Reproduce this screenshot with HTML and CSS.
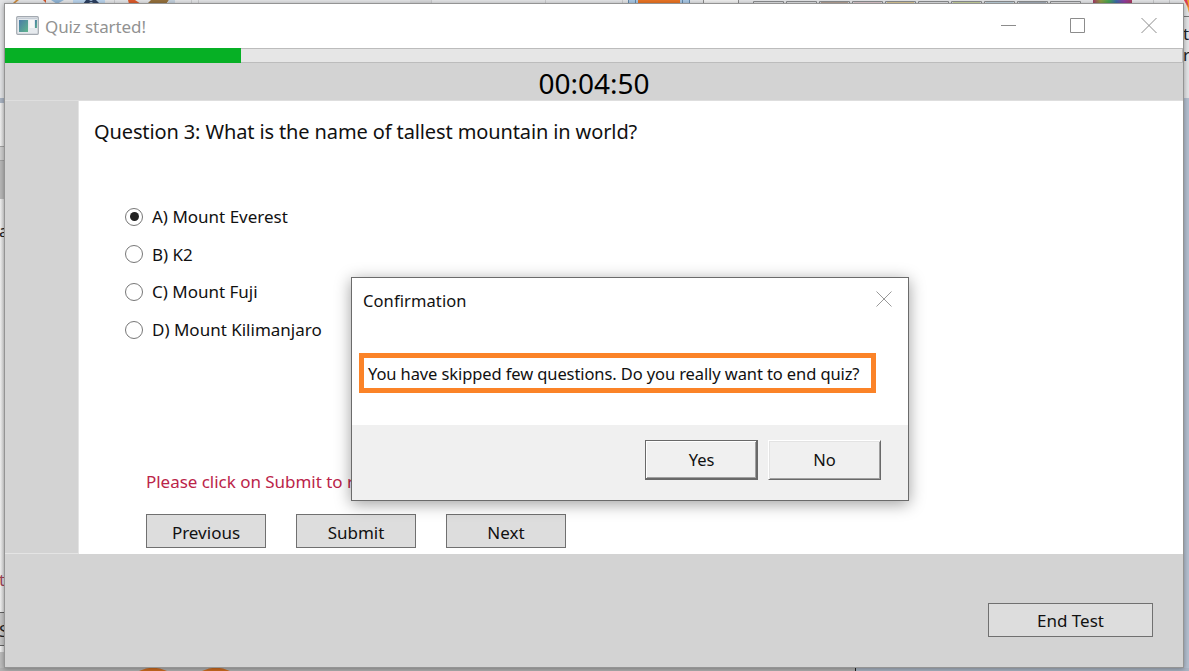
FILE: index.html
```
<!DOCTYPE html>
<html lang="en">
<head>
<meta charset="utf-8">
<title>Quiz started!</title>
<link rel="stylesheet" href="styles.css">
</head>
<body>
<div class="desktop">
  <svg class="backdrop" width="1189" height="671" viewBox="0 0 1189 671">
    <defs>
      <linearGradient id="rainbow"><stop offset="0" stop-color="#a33a66"/><stop offset=".2" stop-color="#8d9a42"/><stop offset=".4" stop-color="#46a551"/><stop offset=".6" stop-color="#3d69a8"/><stop offset=".8" stop-color="#8e3da0"/><stop offset="1" stop-color="#a83a5c"/></linearGradient>
      <linearGradient id="edge"><stop offset="0" stop-color="#f1f1f1"/><stop offset="1" stop-color="#d8d8d8"/></linearGradient>
    </defs>
    <rect width="1189" height="671" fill="#e3e4e6"/>
    <path d="M12 4L16 0h3l-5 4z" fill="#c98a3f"/><path d="M43 0h3v3z" fill="#d0562c"/><path d="M51 0h13l-7 4z" fill="#8fb3d4"/>
    <rect x="73" width="32" height="4" fill="#b9d3ec"/><path d="M83 4l3-4h3l2 1 2-1h3l4 4h-4l-5-2-4 2z" fill="#2c3f60"/>
    <path d="M128 0h7l6 4h-12z" fill="#dc5b2b"/><path d="M151 0h18l-3 4h-19z" fill="#94703c"/><path d="M169 0h6v4h-8z" fill="#c3d0dc"/>
    <path d="M114.500 0v4M191.500 0v4M198.500 0v4M431.500 0v4M545.500 0v4M622.500 0v4" stroke="#c9cacc"/>
    <rect x="410" width="21" height="4" fill="#d8d9db"/>
    <rect x="628" width="62" height="4" fill="#a9c7e4"/><path d="M628.500 0v4M635.500 0v4M682.500 0v4M689.500 0v4" stroke="#6188aa"/><rect x="638" width="42" height="4" fill="#e97424"/>
    <path d="M703.500 0v4M738.500 0v4" stroke="#8b8b8b"/><rect x="704" width="34" height="4" fill="#eeeeee"/>
    <g fill="none" stroke="#8b8d8f">
      <path d="M753.500 4V1.500h30V4M786.500 4V1.500h30V4M819.500 4V1.500h30V4M852.500 4V1.500h30V4M885.500 4V1.500h30V4M918.500 4V1.500h30V4M951.500 4V1.500h30V4M984.500 4V1.500h30V4M1017.500 4V1.500h30V4M1050.500 4V1.500h30V4"/>
    </g>
    <path d="M821 3h27" stroke="#8a6248"/><path d="M854 3h27" stroke="#dfb0b8"/><path d="M887 3h27" stroke="#d9b04a"/><path d="M953 3h27" stroke="#b7c95a"/><path d="M986 3h27" stroke="#9fc4d8"/><path d="M1019 3h27" stroke="#687c92"/>
    <rect x="1093" width="39" height="4" fill="url(#rainbow)"/><path d="M1153.500 0v4M1169.500 0v4" stroke="#c5c6c8"/>
    <path d="M1184 0h5v13q-1-6-5-13z" fill="#f0a52b"/><path d="M1184 0h3l2 8z" fill="#d93a62"/>
    <path d="M1183 16.500h6" stroke="#777"/>
    <rect x="1183" y="98" width="6" height="573" fill="#b3bfcf"/>
    <rect x="0" y="98" width="5" height="5" fill="#a9b3c2"/>
    <rect x="0" y="103" width="5" height="568" fill="url(#edge)"/>
    <rect x="0" y="147" width="5" height="14" fill="#d0d0d0"/><path d="M0 146.500h5M0 160.500h5" stroke="#a2a2a2"/>
    <rect x="0" y="161" width="5" height="38" fill="#b8b8b8"/>
    <rect x="0" y="612" width="5" height="34" fill="#c7c7c7"/><path d="M0 612.500h5M0 645.500h5" stroke="#626262"/>
    <rect x="0" y="652" width="5" height="19" fill="#bdbdbd"/>
    <rect x="0" y="668" width="855" height="3" fill="#b2b2b2"/><path d="M855.500 668v3" stroke="#222" />
    <rect x="856" y="668" width="333" height="3" fill="#aab5c4"/>
    <path d="M139 671q14-7 28 0zM202 671q14-7 28 0z" fill="#ce6c20"/>
    <g class="stray">
      <text x="-1" y="237">a</text><text x="-1" y="586" fill="#a04458">t</text><text x="-1" y="637">S</text>
      <text x="1183" y="40">t</text><text x="1183" y="61">r</text>
    </g>
  </svg>

  <main class="window">
    <header class="titlebar">
      <svg class="app-icon" width="23" height="19" viewBox="0 0 23 19">
        <defs><linearGradient id="scr" x1="0" y1="0" x2="1" y2="1"><stop stop-color="#4a7ba8"/><stop offset="1" stop-color="#5fb58c"/></linearGradient></defs>
        <rect x=".7" y=".7" width="21.600" height="17.600" rx="1" fill="#e6eaee" stroke="#a3a9b0" stroke-width="1.200"/>
        <path d="M2 2.500h19" stroke="#c6cdd6"/><rect x="3" y="4" width="9" height="12" fill="url(#scr)"/>
        <rect x="13.500" y="4" width="4.500" height="8" fill="#f8f8f8"/><rect x="19" y="4" width="2" height="8" fill="url(#scr)"/>
      </svg>
      <h1 class="title">Quiz started!</h1>
      <svg class="controls" width="156" height="16" viewBox="0 0 156 16" fill="none" stroke="#8c8c8c">
        <path d="M0 8.500h15M69.500 1.500h14v14h-14zM140.500 1l15 15M155.500 1l-15 15"/>
      </svg>
    </header>
    <div class="progress"><div class="progress-fill"></div></div>
    <div class="timer">00:04:50</div>
    <div class="middle">
      <aside class="rail"></aside>
      <section class="quiz">
        <h2 class="question">Question 3: What is the name of tallest mountain in world?</h2>
        <div class="options">
          <div class="option"><i class="radio checked"></i><span>A) Mount Everest</span></div>
          <div class="option"><i class="radio"></i><span>B) K2</span></div>
          <div class="option"><i class="radio"></i><span>C) Mount Fuji</span></div>
          <div class="option"><i class="radio"></i><span>D) Mount Kilimanjaro</span></div>
        </div>
        <p class="hint">Please click on Submit to r</p>
        <div class="actions">
          <button class="btn">Previous</button><button class="btn">Submit</button><button class="btn">Next</button>
        </div>
      </section>
    </div>
    <footer class="footer"><button class="btn end">End Test</button></footer>
  </main>

  <section class="dialog" role="dialog">
    <div class="dialog-head">
      <span class="dialog-title">Confirmation</span>
      <svg width="16" height="16" viewBox="0 0 16 16" stroke="#999"><path d="M.5 .5l15 15M15.500 .5l-15 15"/></svg>
    </div>
    <p class="message"><span>You have skipped few questions. Do you really want to end quiz?</span></p>
    <div class="dialog-foot">
      <button class="classic default">Yes</button><button class="classic">No</button>
    </div>
  </section>
</div>
</body>
</html>
```
FILE: styles.css
```
* { box-sizing: border-box; }
body { margin: 0; overflow: hidden; font-family: "Noto Sans", "Open Sans", sans-serif; font-size: 17px; color: #111; }
h1, h2, p { margin: 0; font-weight: 400; }
button { font: inherit; color: inherit; padding: 0; border-radius: 0; }
svg { display: block; }
span, h1, h2, p { white-space: nowrap; }

.desktop { position: relative; width: 1189px; height: 671px; overflow: hidden; padding: 3px 5px 3px 4px; }
.backdrop { position: absolute; left: 0; top: 0; }
.stray { font-size: 17px; fill: #222; }

.window { position: relative; width: 1180px; height: 665px; border: 1px solid #949494; background: #d3d3d3; box-shadow: 0 1px 5px rgba(0,0,0,.35); display: flex; flex-direction: column; }
.titlebar { height: 44px; background: #fff; display: flex; align-items: flex-start; padding: 12px 26px 0 11px; }
.title { margin: 0 auto 0 6px; font-size: 17px; line-height: 22px; color: #929292; letter-spacing: -.1px; }
.controls { margin-top: 1px; }
.progress { height: 15px; background: #e6e6e6; border: 1px solid #bcbcbc; border-left: 0; display: flex; }
.progress-fill { width: 235.500px; height: 15px; margin-top: -1px; background: #06b025; }
.timer { height: 38px; border-bottom: 1px solid #dedede; text-align: center; font-size: 28px; line-height: 41px; color: #000; }
.middle { height: 453px; display: flex; }
.rail { width: 74px; border-right: 1px solid #e4e4e4; border-bottom: 1px solid #e4e4e4; }
.quiz { flex: 1; background: #fff; padding: 16px 0 0 15px; }
.question { font-size: 20px; line-height: 30px; letter-spacing: -.12px; }
.options { margin: 51px 0 0 31px; }
.option { height: 37.600px; display: flex; align-items: center; gap: 9px; }
.radio { width: 18px; height: 18px; border: 1.500px solid #777; border-radius: 50%; display: grid; place-items: center; }
.checked::before { content: ""; width: 9px; height: 9px; border-radius: 50%; background: #222; }
.hint { margin: 121px 0 0 52px; line-height: 26px; color: #bb2449; letter-spacing: -.03px; }
.actions { display: flex; gap: 30px; margin: 19px 0 0 52px; }
.btn { width: 120px; height: 34px; border: 1px solid #707070; background: #ddd; padding-top: 3px; line-height: 28px; }
.footer { flex: 1; display: flex; justify-content: flex-end; padding: 49px 30px 0 0; }
.end { width: 165px; padding-top: 1px; }

.dialog { position: absolute; left: 351px; top: 277px; width: 558px; height: 224px; border: 1px solid #6b6b6b; background: #fff; box-shadow: 0 3px 15px rgba(0,0,0,.38); display: flex; flex-direction: column; }
.dialog-head { height: 75px; display: flex; justify-content: space-between; padding: 13px 16px 0 11px; }
.dialog-title { line-height: 20px; font-size: 16.500px; letter-spacing: .1px; }
.message { width: 517px; height: 40px; margin-left: 7px; border: 5px solid #fb8328; padding-left: 4px; font-size: 16.500px; line-height: 31px; letter-spacing: -.1px; }
.dialog-foot { margin-top: auto; height: 75px; background: #f0f0f0; display: flex; justify-content: flex-end; gap: 10px; padding: 15px 27px 0 0; }
.classic { width: 113px; height: 40px; padding-bottom: 2px; background: #f0f0f0; font-size: 16.500px; border: 1px solid; border-color: #fff #696969 #696969 #fff; box-shadow: inset 1px 1px #e3e3e3, inset -1px -1px #a0a0a0; }
.default { border-color: #696969; box-shadow: inset -1px -1px #696969, inset 1px 1px #fff, inset -2px -2px #a0a0a0; }
```
